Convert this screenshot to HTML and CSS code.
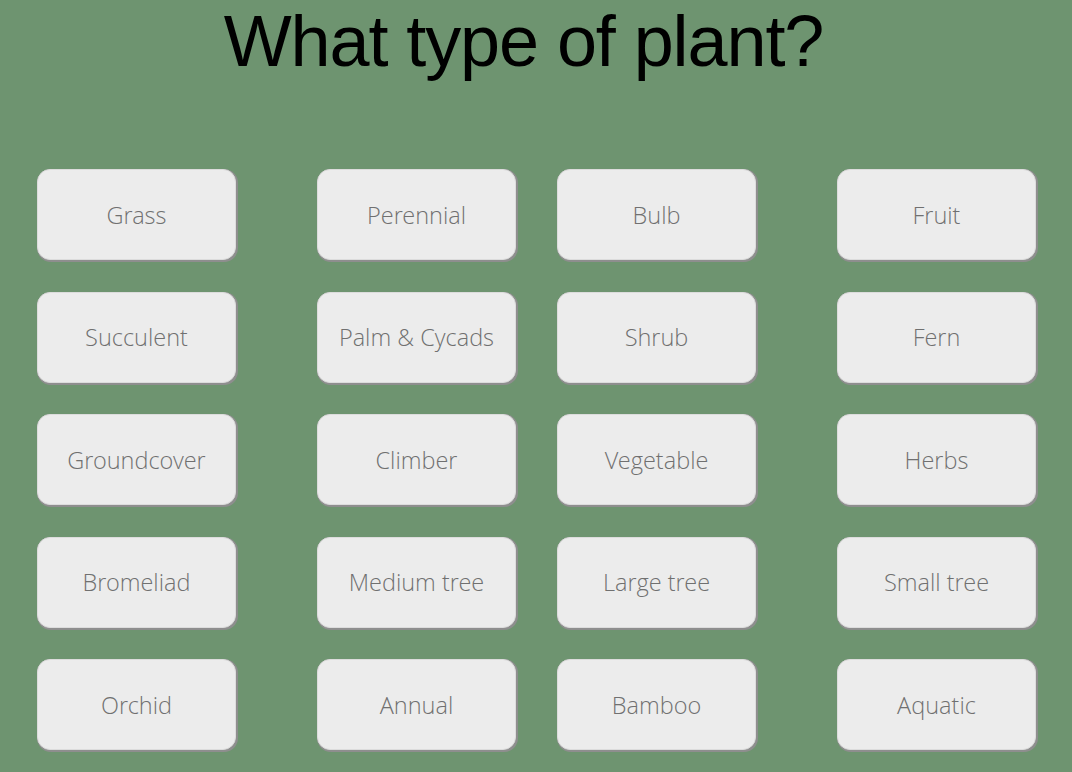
FILE: index.html
```html
<!DOCTYPE html>
<html lang="en">
<head>
<meta charset="utf-8">
<title>What type of plant?</title>
<link rel="stylesheet" href="styles.css">
</head>
<body>
<main class="page">
  <h1 class="title">What type of plant?</h1>
  <div class="grid">
    <button class="opt">Grass</button>
    <button class="opt">Perennial</button>
    <button class="opt">Bulb</button>
    <button class="opt">Fruit</button>
    <button class="opt">Succulent</button>
    <button class="opt">Palm &amp; Cycads</button>
    <button class="opt">Shrub</button>
    <button class="opt">Fern</button>
    <button class="opt">Groundcover</button>
    <button class="opt">Climber</button>
    <button class="opt">Vegetable</button>
    <button class="opt">Herbs</button>
    <button class="opt">Bromeliad</button>
    <button class="opt">Medium tree</button>
    <button class="opt">Large tree</button>
    <button class="opt">Small tree</button>
    <button class="opt">Orchid</button>
    <button class="opt">Annual</button>
    <button class="opt">Bamboo</button>
    <button class="opt">Aquatic</button>
  </div>
</main>
</body>
</html>
```
FILE: styles.css
```css
html, body {
  margin: 0;
  padding: 0;
  background: #6e9470;
  overflow: hidden;
}
.page {
  width: 1072px;
  height: 772px;
}
.title {
  margin: 0;
  font-family: "Liberation Sans", Arial, sans-serif;
  font-weight: normal;
  font-size: 72px;
  letter-spacing: -1.1px;
  color: #000;
  text-align: center;
  padding-right: 25px;
}
.grid {
  display: grid;
  grid-template-columns: 280px 240px 280px 199px;
  grid-auto-rows: 91px;
  row-gap: 31.5px;
  padding-left: 37px;
  margin-top: 87px;
}
.opt {
  width: 199px;
  height: 91px;
  box-sizing: border-box;
  background: #ececec;
  border: 1px solid #dcdcdc;
  border-radius: 13px;
  box-shadow: 1px 1px 0 1px #8e8e8e;
  font-family: "Open Sans Light", "Open Sans", sans-serif;
  font-weight: 300;
  font-size: 23.5px;
  color: #707070;
  padding: 0;
}
```
